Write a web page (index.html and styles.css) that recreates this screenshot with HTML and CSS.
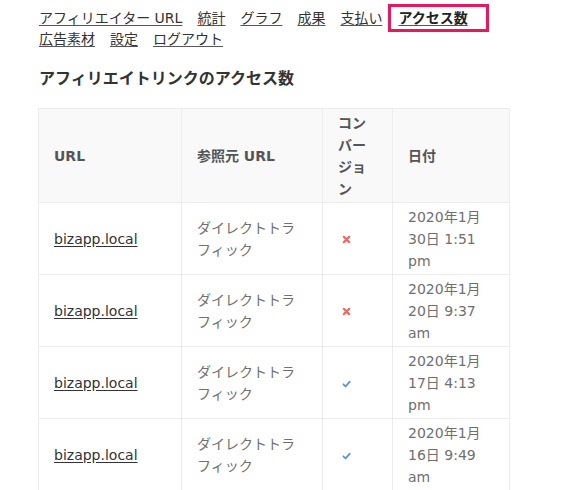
FILE: index.html
```html
<!DOCTYPE html>
<html lang="ja">
<head>
<meta charset="utf-8">
<title>アフィリエイトリンクのアクセス数</title>
<link rel="stylesheet" href="styles.css">
</head>
<body>
<div class="page">
  <nav class="tabs">
    <a href="#">アフィリエイター URL</a>
    <a href="#">統計</a>
    <a href="#">グラフ</a>
    <a href="#">成果</a>
    <a href="#">支払い</a>
    <a href="#" class="active">アクセス数</a>
    <a href="#">広告素材</a>
    <a href="#">設定</a>
    <a href="#">ログアウト</a>
  </nav>

  <h2 class="title">アフィリエイトリンクのアクセス数</h2>

  <table class="visits">
    <colgroup>
      <col class="c-url">
      <col class="c-ref">
      <col class="c-conv">
      <col class="c-date">
    </colgroup>
    <thead>
      <tr>
        <th>URL</th>
        <th>参照元 URL</th>
        <th>コンバージョン</th>
        <th>日付</th>
      </tr>
    </thead>
    <tbody>
      <tr>
        <td><a href="#">bizapp.local</a></td>
        <td class="muted">ダイレクトトラフィック</td>
        <td><span class="mark no"><svg viewBox="0 0 10 10" width="9" height="9"><path d="M2 2 L8 8 M8 2 L2 8" stroke="#f0645f" stroke-width="2.4" stroke-linecap="round"/></svg></span></td>
        <td class="muted">2020年1月30日 1:51 pm</td>
      </tr>
      <tr>
        <td><a href="#">bizapp.local</a></td>
        <td class="muted">ダイレクトトラフィック</td>
        <td><span class="mark no"><svg viewBox="0 0 10 10" width="9" height="9"><path d="M2 2 L8 8 M8 2 L2 8" stroke="#f0645f" stroke-width="2.4" stroke-linecap="round"/></svg></span></td>
        <td class="muted">2020年1月20日 9:37 am</td>
      </tr>
      <tr>
        <td><a href="#">bizapp.local</a></td>
        <td class="muted">ダイレクトトラフィック</td>
        <td><span class="mark yes"><svg viewBox="0 0 10 9" width="9" height="8"><path d="M1.5 4.8 L4 7.2 L8.7 1.8" fill="none" stroke="#5b8ee6" stroke-width="1.9" stroke-linecap="round" stroke-linejoin="round"/></svg></span></td>
        <td class="muted">2020年1月17日 4:13 pm</td>
      </tr>
      <tr>
        <td><a href="#">bizapp.local</a></td>
        <td class="muted">ダイレクトトラフィック</td>
        <td><span class="mark yes"><svg viewBox="0 0 10 9" width="9" height="8"><path d="M1.5 4.8 L4 7.2 L8.7 1.8" fill="none" stroke="#5b8ee6" stroke-width="1.9" stroke-linecap="round" stroke-linejoin="round"/></svg></span></td>
        <td class="muted">2020年1月16日 9:49 am</td>
      </tr>
    </tbody>
  </table>
</div>
</body>
</html>
```

FILE: styles.css
```css
html, body {
  margin: 0;
  padding: 0;
  background: #fff;
}

body {
  font-family: "DejaVu Sans", "Noto Sans CJK JP", sans-serif;
  font-size: 14px;
  color: #333;
}

.page {
  width: 471px;
  padding: 8px 0 0 38px;
}

.tabs {
  display: flex;
  flex-wrap: wrap;
  column-gap: 15px;
  line-height: 21px;
  padding-left: 1px;
}

.tabs a {
  color: #333;
  text-decoration: underline;
  text-underline-offset: 2px;
  text-decoration-color: #555;
}

.tabs a.active {
  position: relative;
  margin-left: 1px;
  font-weight: bold;
  color: #222;
}

.tabs a.active::after {
  content: "";
  position: absolute;
  left: -10px;
  right: -21px;
  top: -4px;
  bottom: -3px;
  border: 3px solid #e8185e;
}

.title {
  margin: 17px 0 17px 1px;
  font-size: 16px;
  line-height: 24px;
  font-weight: bold;
  color: #333;
}

.visits {
  width: 471px;
  table-layout: fixed;
  border-collapse: collapse;
  border: 1px solid #ececec;
}

.c-url { width: 143px; }
.c-ref { width: 141px; }
.c-conv { width: 70px; }
.c-date { width: 117px; }

.visits th,
.visits td {
  border: 1px solid #ececec;
  padding: 2.5px 15px;
  line-height: 22px;
  text-align: left;
  vertical-align: middle;
}

.visits th {
  background: #f9f9f9;
  font-weight: bold;
  color: #555;
}

.visits td a {
  color: #333;
  text-decoration: underline;
  text-underline-offset: 2px;
}

.visits td.muted {
  color: #6f6f6f;
}

.mark {
  display: inline-block;
  margin-left: 4px;
  vertical-align: middle;
  line-height: 0;
}
```
